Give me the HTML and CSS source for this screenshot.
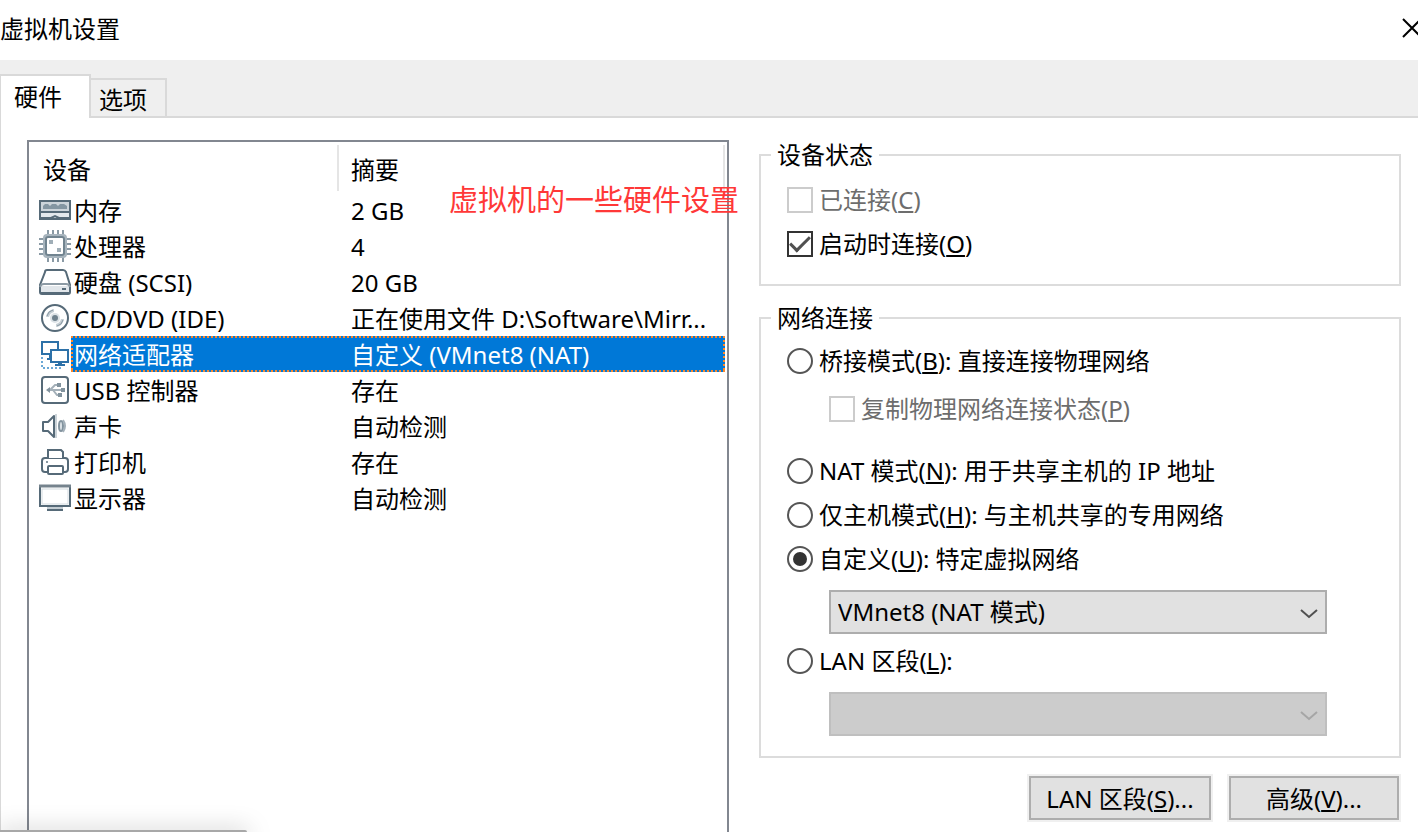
FILE: index.html
```html
<!DOCTYPE html>
<html lang="zh-CN">
<head>
<meta charset="utf-8">
<title>虚拟机设置</title>
<link rel="stylesheet" href="styles.css">
</head>
<body>
<div class="dialog">
  <header class="titlebar">
    <h1 class="title">虚拟机设置</h1>
    <button class="close" type="button" aria-label="关闭">
      <svg width="20" height="20" viewBox="0 0 20 20"><path d="M1 1L19 19M19 1L1 19" fill="none" stroke="#000" stroke-width="2"/></svg>
    </button>
  </header>
  <nav class="tabs" role="tablist">
    <button class="tab tab-active" type="button" role="tab" aria-selected="true">硬件</button>
    <button class="tab" type="button" role="tab" aria-selected="false">选项</button>
  </nav>
  <main class="content">
    <section class="devices">
      <table class="device-table">
        <colgroup><col class="col-icon"><col class="col-name"><col></colgroup>
        <thead>
          <tr><th colspan="2"><div class="head head-device">设备</div></th><th><div class="head head-summary">摘要</div></th></tr>
        </thead>
        <tbody>
          <tr>
            <td class="icon"><svg width="32" height="32" viewBox="0 0 32 32" fill="none"><rect x="1" y="7" width="30" height="18" fill="#e3e8ec" stroke="#566a78" stroke-width="2"/><path d="M2 8H30V17H2Z" fill="#ccd4da"/><path d="M4 15V12L6 10H9L11 12L13 10H17L19 12L21 10H25L28 12V15Z" fill="#8496a2"/><path d="M1 18H31" stroke="#566a78" stroke-width="2"/><path d="M2 24H12L16 22L20 24H30" stroke="#566a78" stroke-width="2"/></svg></td>
            <td class="name">内存</td><td class="summary">2 GB</td>
          </tr>
          <tr>
            <td class="icon"><svg width="32" height="32" viewBox="0 0 32 32" fill="none"><path d="M9 0V5M14 0V5M19 0V5M24 0V5M9 27V32M14 27V32M19 27V32M24 27V32M0 9H5M0 14H5M0 19H5M0 24H5M27 9H32M27 14H32M27 19H32M27 24H32" stroke="#8a9aa5" stroke-width="2"/><rect x="5" y="5" width="22" height="22" rx="3" fill="#b9c4cb" stroke="#a7b4bd" stroke-width="2"/><rect x="7" y="7" width="18" height="18" rx="2" fill="#fff" stroke="#718490" stroke-width="2"/><path d="M10 10H14V14H10ZM18 18H22V22H18Z" fill="#a0aeb7"/></svg></td>
            <td class="name">处理器</td><td class="summary">4</td>
          </tr>
          <tr>
            <td class="icon"><svg width="32" height="32" viewBox="0 0 32 32" fill="none"><path d="M6 6Q6 4 8 4H24Q26 4 27 6L31 19V26Q31 28 29 28H3Q1 28 1 26V19Z" fill="#fff" stroke="#566a78" stroke-width="2"/><path d="M2 20H30V26H2Z" fill="#e1e6ea"/><path d="M1 21Q2 18 5 18H27Q30 18 31 21" stroke="#8c9aa4" stroke-width="2"/><path d="M2 27H30" stroke="#566a78" stroke-width="2"/><path d="M23 23H27" stroke="#566a78" stroke-width="2"/></svg></td>
            <td class="name">硬盘 (SCSI)</td><td class="summary">20 GB</td>
          </tr>
          <tr>
            <td class="icon"><svg width="32" height="32" viewBox="0 0 32 32" fill="none"><circle cx="16" cy="16" r="13" fill="#fff" stroke="#566a78" stroke-width="2"/><path d="M7 15Q8 8 15 7V10Q11 11 10 15ZM25 17Q24 24 17 25V22Q21 21 22 17Z" fill="#c6cfd5"/><path d="M8 14Q9 9 14 8M24 18Q23 23 18 24" stroke="#8797a2" stroke-width="1"/><circle cx="16" cy="16" r="5" fill="#dce2e6"/><circle cx="16" cy="16" r="3" fill="#6f818d"/></svg></td>
            <td class="name">CD/DVD (IDE)</td><td class="summary">正在使用文件 D:\Software\Mirr...</td>
          </tr>
          <tr class="selected" aria-selected="true">
            <td class="icon"><svg width="32" height="32" viewBox="0 0 32 32" fill="none"><path d="M3 19V31M4 30H22" stroke="#6ba8d6" stroke-width="2" stroke-dasharray="2 2"/><rect x="3" y="4" width="16" height="12" fill="#fff" stroke="#2d71a8" stroke-width="2"/><path d="M11 16V21H8M8 21H14" stroke="#2d71a8" stroke-width="2"/><rect x="12" y="12" width="17" height="12" fill="#fff" stroke="#2d71a8" stroke-width="2"/><path d="M19 24H23V26H26V28H16V26H19Z" fill="#2d71a8"/></svg></td>
            <td class="name">网络适配器</td><td class="summary">自定义 (VMnet8 (NAT)</td>
          </tr>
          <tr>
            <td class="icon"><svg width="32" height="32" viewBox="0 0 32 32" fill="none"><rect x="3" y="3" width="26" height="26" rx="3" fill="#fff" stroke="#566a78" stroke-width="2"/><path d="M9 16H25M11 16L16 11H20M14 16L18 21H22" stroke="#a4b0b9" stroke-width="2"/><path d="M7 16L11 13V19ZM18 9H22V13H18ZM19 19H23V23H19ZM22 14H26V18H22Z" fill="#82939e"/></svg></td>
            <td class="name">USB 控制器</td><td class="summary">存在</td>
          </tr>
          <tr>
            <td class="icon"><svg width="32" height="32" viewBox="0 0 32 32" fill="none"><path d="M4 12H9L15 6V27L9 21H4Z" fill="#fff" stroke="#566a78" stroke-width="2" stroke-linejoin="round"/><path d="M17 4V28" stroke="#ccd4d9" stroke-width="2"/><ellipse cx="22" cy="16" rx="2" ry="5" fill="#dce2e6" stroke="#82939e" stroke-width="2"/><path d="M24 10Q28 16 24 22" stroke="#a4b0b9" stroke-width="2"/></svg></td>
            <td class="name">声卡</td><td class="summary">自动检测</td>
          </tr>
          <tr>
            <td class="icon"><svg width="32" height="32" viewBox="0 0 32 32" fill="none"><rect x="3" y="12" width="26" height="14" rx="3" fill="#fff" stroke="#566a78" stroke-width="2"/><path d="M9 12V4H22L24 6V12" fill="#fff" stroke="#566a78" stroke-width="2"/><rect x="9" y="20" width="15" height="8" rx="1" fill="#fff" stroke="#566a78" stroke-width="2"/><path d="M7 15H9V17H7Z" fill="#8797a2"/></svg></td>
            <td class="name">打印机</td><td class="summary">存在</td>
          </tr>
          <tr>
            <td class="icon"><svg width="32" height="32" viewBox="0 0 32 32" fill="none"><rect x="1" y="4" width="30" height="20" fill="#fff" stroke="#566a78" stroke-width="2"/><path d="M0 4H32" stroke="#75838d" stroke-width="3"/><rect x="3" y="7" width="26" height="15" stroke="#d4dbe0" stroke-width="1"/><path d="M8 26H24" stroke="#c4cdd3" stroke-width="2"/><path d="M8 28H24" stroke="#566a78" stroke-width="2"/></svg></td>
            <td class="name">显示器</td><td class="summary">自动检测</td>
          </tr>
        </tbody>
      </table>
      <p class="note">虚拟机的一些硬件设置</p>
    </section>
    <section class="settings">
      <fieldset class="group">
        <legend>设备状态</legend>
        <label class="option disabled"><input type="checkbox" disabled><span>已连接(<u>C</u>)</span></label>
        <label class="option"><input type="checkbox" checked><span>启动时连接(<u>O</u>)</span></label>
      </fieldset>
      <fieldset class="group group-network">
        <legend>网络连接</legend>
        <label class="option"><input type="radio" name="net"><span>桥接模式(<u>B</u>): 直接连接物理网络</span></label>
        <label class="option option-sub disabled"><input type="checkbox" disabled><span>复制物理网络连接状态(<u>P</u>)</span></label>
        <label class="option"><input type="radio" name="net"><span>NAT 模式(<u>N</u>): 用于共享主机的 IP 地址</span></label>
        <label class="option"><input type="radio" name="net"><span>仅主机模式(<u>H</u>): 与主机共享的专用网络</span></label>
        <label class="option"><input type="radio" name="net" checked><span>自定义(<u>U</u>): 特定虚拟网络</span></label>
        <div class="dropdown">
          <select aria-label="自定义虚拟网络"><option>VMnet8 (NAT 模式)</option></select>
          <svg class="chevron" width="18" height="12" viewBox="0 0 18 12"><path d="M1 2L9 9L17 2" fill="none" stroke="#505050" stroke-width="2"/></svg>
        </div>
        <label class="option option-lan"><input type="radio" name="net"><span>LAN 区段(<u>L</u>):</span></label>
        <div class="dropdown">
          <select aria-label="LAN 区段" disabled><option></option></select>
          <svg class="chevron" width="18" height="12" viewBox="0 0 18 12"><path d="M1 2L9 9L17 2" fill="none" stroke="#a6a6a6" stroke-width="2"/></svg>
        </div>
      </fieldset>
      <div class="actions">
        <button class="button button-lan" type="button">LAN 区段(<u>S</u>)...</button>
        <button class="button" type="button">高级(<u>V</u>)...</button>
      </div>
    </section>
  </main>
  <div class="window-edge"></div>
</div>
</body>
</html>
```
FILE: styles.css
```css
* { box-sizing: border-box; }

body {
  margin: 0;
  background: #fff;
  color: #000;
  font: 24px/32px "Noto Sans", "Noto Sans CJK SC", sans-serif;
}

button, select { font: inherit; color: inherit; }

u { text-decoration-thickness: 2px; text-underline-offset: 2px; text-decoration-skip-ink: none; }

.dialog {
  position: relative;
  display: flex;
  flex-direction: column;
  height: 100vh;
  overflow: hidden;
}

.titlebar {
  flex: none;
  display: flex;
  align-items: center;
  justify-content: space-between;
  height: 60px;
  padding-bottom: 2px;
}

.title { margin: 0; font-size: 24px; font-weight: 400; }

.close {
  display: flex;
  width: 16px;
  padding: 0;
  margin-bottom: 2px;
  border: 0;
  background: none;
  overflow: hidden;
}

.close svg { flex: none; }

.tabs {
  flex: none;
  display: flex;
  align-items: flex-end;
  height: 58px;
  background: #efefef;
  box-shadow: inset 0 -2px #d9d9d9;
}

.tab {
  height: 40px;
  padding: 4px 18px 0 8px;
  border: 2px solid #d9d9d9;
  border-left: 0;
  background: #efefef;
}

.tab-active {
  height: 44px;
  padding: 0 27px 0 13px;
  border-left: 1px solid #d9d9d9;
  border-bottom: 0;
  background: #fff;
}

.content {
  flex: 1;
  min-height: 0;
  display: grid;
  grid-template-columns: 702fr 642fr;
  gap: 30px;
  padding: 22px 17px 0 26px;
  border-left: 1px solid #d9d9d9;
}

.devices {
  position: relative;
  padding-right: 2px;
  border: 2px solid #828790;
  border-bottom: 0;
}

.device-table { width: 100%; table-layout: fixed; border-spacing: 0; }
.col-icon { width: 42px; }
.col-name { width: 268px; }

th, td { padding: 0; font-weight: 400; text-align: left; white-space: nowrap; }

.head {
  height: 46px;
  margin: 3px 0 1px;
  padding-top: 9px;
  border-right: 2px solid #e5e5e5;
}

.head-device { padding-left: 14px; }
.head-summary { padding-left: 12px; }

td { height: 36px; }
.icon { padding-left: 10px; }
.icon svg { display: block; }
.name { padding: 2px 0 0 3px; }
.summary { padding: 2px 0 0 12px; }

.selected .name, .selected .summary {
  --dots: #ff8728 0 2px, #0078d7 2px 4px;
  color: #fff;
  background:
    repeating-linear-gradient(90deg, var(--dots)) top / 100% 2px no-repeat,
    repeating-linear-gradient(90deg, var(--dots)) bottom / 100% 2px no-repeat,
    repeating-linear-gradient(var(--dots)) var(--edge) / 2px 100% no-repeat,
    #0078d7;
}

.selected .name { --edge: left; }
.selected .summary { --edge: right; }

.note {
  position: absolute;
  top: 40px;
  left: 420px;
  margin: 0;
  color: #ff3838;
  font-size: 29px;
  line-height: 36px;
  white-space: nowrap;
}

.settings { min-width: 0; }

.group {
  min-width: 0;
  margin: 0 0 17px;
  padding: 8px 72px 18px 26px;
  border: 2px solid #dcdcdc;
}

.group-network { padding-top: 6px; padding-bottom: 20px; }

legend { margin-left: -16px; padding: 0 6px; line-height: 30px; }

.option { display: flex; align-items: center; gap: 6px; height: 44px; white-space: nowrap; }
.option-sub { margin: 4px 0 18px 42px; }
.option-lan { margin-top: 5px; }
.disabled { color: #6d6d6d; }

input {
  appearance: none;
  flex: none;
  display: grid;
  place-content: center;
  width: 26px;
  height: 26px;
  margin: 0;
  border: 2px solid #333;
  background: #fff;
}

input:disabled { border-color: #ccc; }
input[type="radio"] { border-radius: 50%; border-color: #555; }

input[type="radio"]:checked::before {
  content: "";
  width: 14px;
  height: 14px;
  border-radius: 50%;
  background: #333;
}

input[type="checkbox"]:checked::before {
  content: "";
  width: 17px;
  height: 8px;
  margin-bottom: 5px;
  border: solid #505050;
  border-width: 0 0 3px 3px;
  transform: rotate(-45deg);
}

.dropdown { position: relative; margin: 9px 0 0 42px; }

select {
  appearance: none;
  display: block;
  width: 100%;
  height: 44px;
  padding: 0 36px 0 7px;
  border: 2px solid #adadad;
  border-radius: 0;
  background: #e1e1e1;
}

select:disabled { border-color: #bfbfbf; background: #ccc; opacity: 1; }

.chevron { position: absolute; top: 18px; right: 9px; pointer-events: none; }

.actions { display: flex; justify-content: flex-end; gap: 18px; padding: 1px 2px 0 0; }

.button {
  min-width: 170px;
  height: 44px;
  padding: 2px 10px 0;
  border: 2px solid #adadad;
  background: #e1e1e1;
  box-shadow: 0 0 0 2px #f0f0f0;
}

.button-lan { min-width: 182px; }

.window-edge {
  position: absolute;
  bottom: 0;
  left: 0;
  width: 247px;
  height: 2px;
  background: #a8a8a8;
  border-top-right-radius: 2px;
  box-shadow: 0 4px 24px 2px rgba(0, 0, 0, 0.4);
}
```
